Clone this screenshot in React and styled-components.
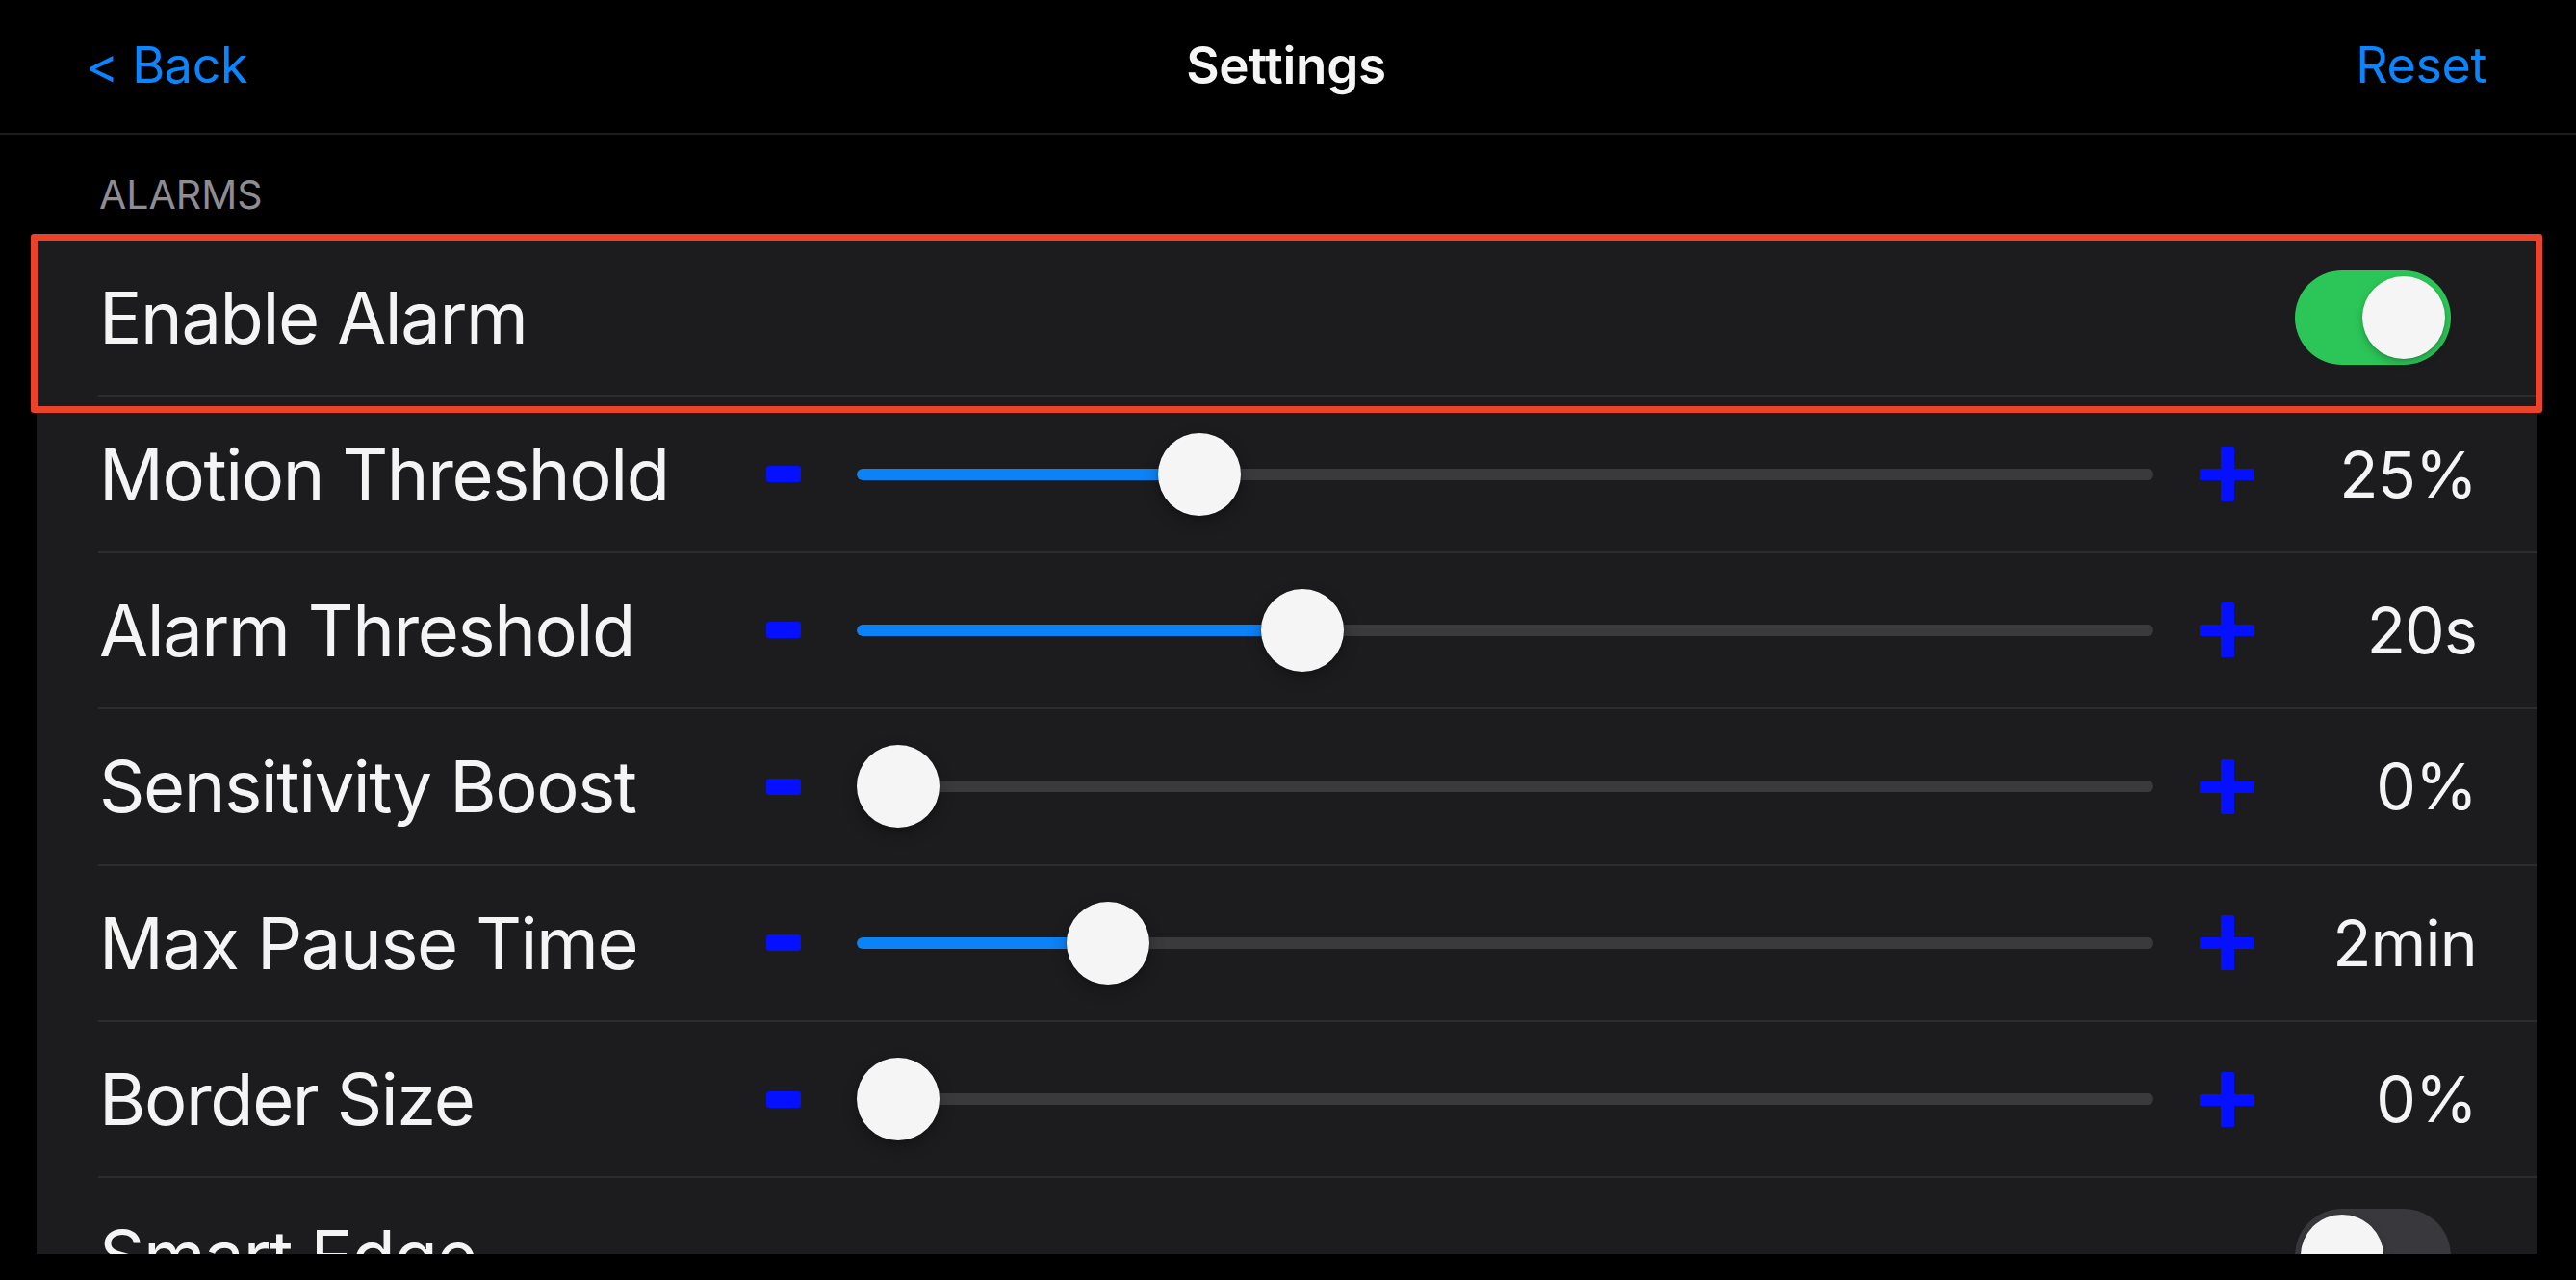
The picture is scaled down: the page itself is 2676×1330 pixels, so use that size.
import React from "react";
import styled, { createGlobalStyle } from "styled-components";

const GlobalStyle = createGlobalStyle`
  html, body {
    margin: 0;
    padding: 0;
    background: #000;
  }
  body {
    font-family: Inter, "Noto Sans", "Liberation Sans", sans-serif;
    -webkit-font-smoothing: antialiased;
  }
  * { box-sizing: border-box; }
`;

const Page = styled.div`
  width: 2676px;
  height: 1330px;
  background: #000;
  display: flex;
  flex-direction: column;
  overflow: hidden;
`;

const NavBar = styled.header`
  height: 140px;
  flex: 0 0 140px;
  display: grid;
  grid-template-columns: 1fr auto 1fr;
  align-items: center;
  padding: 0 93px 2px 89px;
  border-bottom: 2px solid #1d1d1f;
  font-size: 52px;
  line-height: 1;
`;

const NavButton = styled.button`
  background: none;
  border: none;
  padding: 0;
  font: inherit;
  color: #0a84ff;
  letter-spacing: -0.4px;
  justify-self: ${(p) => (p.$align === "end" ? "end" : "start")};
  cursor: pointer;
`;

const NavTitle = styled.h1`
  margin: 0;
  font-size: 53px;
  font-weight: 600;
  color: #f5f5f5;
  letter-spacing: -0.3px;
`;

const Content = styled.main`
  flex: 1;
  overflow: hidden;
  padding: 0 40px 0 38px;
`;

const SectionHeader = styled.div`
  padding: 42px 0 27px 65px;
  font-size: 41px;
  line-height: 41px;
  color: #8d8d93;
`;

const Card = styled.section`
  background: #1c1c1e;
`;

const Row = styled.div`
  position: relative;
  height: 162.4px;
  display: grid;
  align-items: center;
  grid-template-columns: ${(p) =>
    p.$kind === "slider" ? "693px 36px 1fr 57px 231px" : "1fr auto"};
  padding: 0 ${(p) => (p.$kind === "slider" ? "63px" : "90px")} 2px 65px;

  &::after {
    content: "";
    position: absolute;
    left: 64px;
    right: 0;
    bottom: 0;
    height: 2px;
    background: #2c2c2f;
  }
`;

const Highlight = styled.div`
  position: absolute;
  top: -7px;
  left: -6px;
  right: -5px;
  bottom: -17px;
  border: 7px solid #ea4329;
  border-radius: 3px;
  pointer-events: none;
  z-index: 2;
`;

const Label = styled.span`
  font-size: 74px;
  line-height: 1;
  color: #f4f4f4;
  letter-spacing: -1.4px;
  white-space: nowrap;
`;

const Value = styled.span`
  justify-self: end;
  font-size: 66px;
  line-height: 1;
  color: #f4f4f4;
  letter-spacing: -0.8px;
`;

const StepButton = styled.button`
  background: none;
  border: none;
  padding: 0;
  display: flex;
  align-items: center;
  justify-content: center;
  cursor: pointer;
  svg { display: block; }
`;

const SliderTrack = styled.div`
  position: relative;
  height: 86px;
  margin: 0 48px 0 58px;
  display: flex;
  align-items: center;
`;

const TrackBar = styled.div`
  position: relative;
  width: 100%;
  height: 12px;
  border-radius: 6px;
  background: #3a3a3d;
  overflow: hidden;
`;

const TrackFill = styled.div`
  height: 100%;
  background: #0c82f7;
  border-radius: 6px;
`;

const Thumb = styled.div`
  position: absolute;
  top: 0;
  width: 86px;
  height: 86px;
  border-radius: 50%;
  background: #f5f5f6;
  box-shadow: 0 6px 16px rgba(0, 0, 0, 0.28), 0 1px 3px rgba(0, 0, 0, 0.2);
`;

const Switch = styled.div`
  width: 162px;
  height: 98px;
  border-radius: 49px;
  background: ${(p) => (p.$on ? "#2cc658" : "#39393d")};
  padding: 6px;
  display: flex;
  justify-content: ${(p) => (p.$on ? "flex-end" : "flex-start")};
`;

const SwitchKnob = styled.div`
  width: 86px;
  height: 86px;
  border-radius: 50%;
  background: #f5f5f6;
  box-shadow: 0 4px 10px rgba(0, 0, 0, 0.22), 0 1px 2px rgba(0, 0, 0, 0.15);
`;

const BottomInset = styled.div`
  flex: 0 0 27px;
  background: #000;
`;

const MinusIcon = () => (
  <svg width="36" height="17" viewBox="0 0 36 17">
    <rect x="0" y="0" width="36" height="17" rx="3" fill="#0410ff" />
  </svg>
);

const PlusIcon = () => (
  <svg width="57" height="57" viewBox="0 0 57 57">
    <rect x="22" y="0" width="14" height="57" rx="1.5" fill="#0410ff" />
    <rect x="0" y="23" width="57" height="12" rx="1.5" fill="#0410ff" />
  </svg>
);

const Slider = ({ fraction }) => (
  <SliderTrack>
    <TrackBar>
      <TrackFill style={{ width: `calc(${fraction} * (100% - 86px) + 43px)`, opacity: fraction > 0 ? 1 : 0 }} />
    </TrackBar>
    <Thumb style={{ left: `calc(${fraction} * (100% - 86px))` }} />
  </SliderTrack>
);

const sliders = [
  { label: "Motion Threshold", value: "25%", fraction: 0.248 },
  { label: "Alarm Threshold", value: "20s", fraction: 0.333 },
  { label: "Sensitivity Boost", value: "0%", fraction: 0 },
  { label: "Max Pause Time", value: "2min", fraction: 0.173 },
  { label: "Border Size", value: "0%", fraction: 0 },
];

export default function App() {
  return (
    <>
      <GlobalStyle />
      <Page>
        <NavBar>
          <NavButton>&lt; Back</NavButton>
          <NavTitle>Settings</NavTitle>
          <NavButton $align="end">Reset</NavButton>
        </NavBar>
        <Content>
          <SectionHeader>ALARMS</SectionHeader>
          <Card>
            <Row $kind="toggle">
              <Label>Enable Alarm</Label>
              <Switch $on>
                <SwitchKnob />
              </Switch>
              <Highlight />
            </Row>
            {sliders.map((s) => (
              <Row $kind="slider" key={s.label}>
                <Label>{s.label}</Label>
                <StepButton aria-label="decrease">
                  <MinusIcon />
                </StepButton>
                <Slider fraction={s.fraction} />
                <StepButton aria-label="increase">
                  <PlusIcon />
                </StepButton>
                <Value>{s.value}</Value>
              </Row>
            ))}
            <Row $kind="toggle">
              <Label>Smart Edge</Label>
              <Switch>
                <SwitchKnob />
              </Switch>
            </Row>
          </Card>
        </Content>
        <BottomInset />
      </Page>
    </>
  );
}
